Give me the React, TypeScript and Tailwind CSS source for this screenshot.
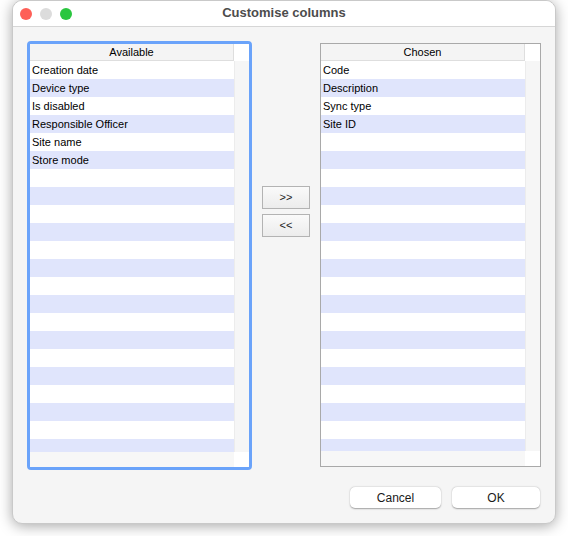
import React from 'react';

const available = ['Creation date', 'Device type', 'Is disabled', 'Responsible Officer', 'Site name', 'Store mode'];
const chosen = ['Code', 'Description', 'Sync type', 'Site ID'];

const ROWS = 22;

interface ColumnListProps {
  title: string;
  items: string[];
}

const ColumnList: React.FC<ColumnListProps> = ({ title, items }) => {
  const rows = Array.from({ length: ROWS }, (_, i) => items[i] ?? '');

  return (
    <div className="flex h-full w-full flex-col bg-[#f7f7f7]">
      {/* Header + vertical scrollbar corner */}
      <div className="flex h-[17px] shrink-0">
        <div className="flex flex-1 items-center justify-center border-r border-b border-[#dedede] bg-[#f4f4f4] pt-[1px] text-[11px] leading-none text-black">
          {title}
        </div>
        <div className="w-[15px] bg-white" />
      </div>

      <div className="flex min-h-0 flex-1">
        <div className="flex-1 overflow-hidden">
          {rows.map((label, i) => (
            <div
              key={i}
              className={`flex h-[18px] items-center pl-[2px] text-[11px] leading-none text-black ${
                i % 2 === 0 ? 'bg-white' : 'bg-[#e0e5fc]'
              }`}
            >
              {label}
            </div>
          ))}
        </div>
        {/* vertical scrollbar track */}
        <div className="w-[15px] shrink-0 border-l border-[#ececec] bg-[#f6f6f6]" />
      </div>

      {/* horizontal scrollbar strip */}
      <div className="flex h-[15px] shrink-0">
        <div className="flex-1 bg-[#f7f7f7]" />
        <div className="w-[15px] bg-white" />
      </div>
    </div>
  );
};

const MoveButton: React.FC<{ label: string }> = ({ label }) => (
  <button className="flex h-[23px] w-[48px] items-center justify-center border border-[#b3b3b3] bg-gradient-to-b from-[#fafafa] to-[#ececec] text-[11px] leading-none text-[#222]">
    {label}
  </button>
);

export default function App() {
  return (
    <div
      className="h-[536px] w-[568px] overflow-hidden bg-white pl-[12px]"
      style={{ fontFamily: '"Liberation Sans", Arial, sans-serif' }}
    >
      <div className="flex h-[524px] w-[544px] flex-col overflow-hidden rounded-[10px] border border-[#c9c9c9] bg-[#f5f5f5] shadow-[0_2px_14px_rgba(0,0,0,0.35)]">
        {/* Title bar */}
        <div className="relative flex h-[26px] shrink-0 items-center justify-center border-b border-[#d6d6d6] bg-white">
          <div className="absolute left-[7px] top-[7px] flex gap-[8px]">
            <span className="h-[12px] w-[12px] rounded-full bg-[#fe5f57]" />
            <span className="h-[12px] w-[12px] rounded-full bg-[#dcdcdc]" />
            <span className="h-[12px] w-[12px] rounded-full bg-[#2ac63f]" />
          </div>
          <span className="pb-[1px] text-[13px] font-bold text-[#4c4c4c]">Customise columns</span>
        </div>

        {/* Body */}
        <div className="flex flex-1 flex-col px-[14px] pt-[14px] pb-[15px]">
          <div className="flex h-[429px]">
            <div className="h-full w-[225px] overflow-hidden rounded-[4px] border-[3px] border-[#6aa3fa]">
              <ColumnList title="Available" items={available} />
            </div>

            <div className="flex w-[68px] flex-col items-center gap-[5px] pt-[145px]">
              <MoveButton label=">>" />
              <MoveButton label="<<" />
            </div>

            <div className="mt-[2px] h-[424px] w-[221px] border border-[#a9a9a9]">
              <ColumnList title="Chosen" items={chosen} />
            </div>
          </div>

          <div className="mt-[17px] flex justify-end gap-[11px] pr-[1px]">
            <button className="h-[21px] w-[91px] rounded-[5px] bg-white text-[12px] leading-none text-[#1a1a1a] shadow-[0_0.5px_1.5px_rgba(0,0,0,0.35)]">
              Cancel
            </button>
            <button className="h-[21px] w-[88px] rounded-[5px] bg-white text-[12px] leading-none text-[#1a1a1a] shadow-[0_0.5px_1.5px_rgba(0,0,0,0.35)]">
              OK
            </button>
          </div>
        </div>
      </div>
    </div>
  );
}
